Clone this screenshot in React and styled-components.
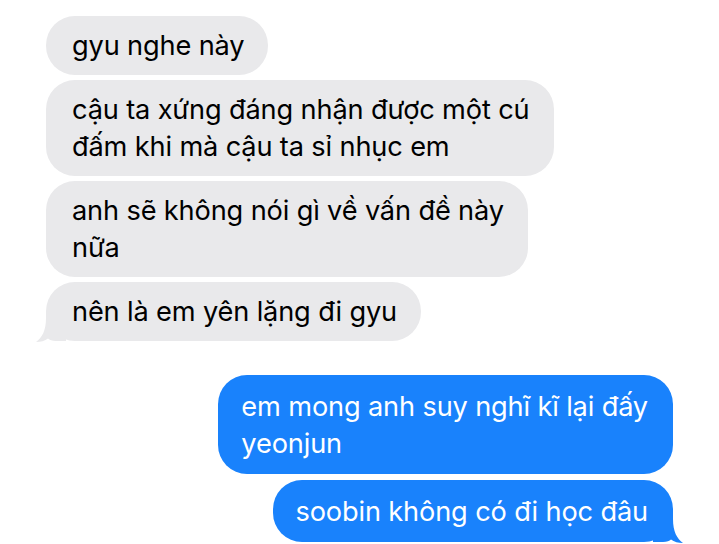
import React from 'react'
import styled, { createGlobalStyle } from 'styled-components'

const GlobalStyle = createGlobalStyle`
  html, body {
    margin: 0;
    padding: 0;
    background: #ffffff;
  }
  body {
    font-family: Inter, "Noto Sans", "Liberation Sans", sans-serif;
    -webkit-font-smoothing: antialiased;
  }
`

const Thread = styled.div`
  display: flex;
  flex-direction: column;
  width: 719px;
  height: 544px;
  padding: 16px 46px 0;
  box-sizing: border-box;
  overflow: hidden;
`

const Group = styled.div`
  display: flex;
  flex-direction: column;
  align-items: ${p => (p.mine ? 'flex-end' : 'flex-start')};
  gap: ${p => (p.mine ? '6px' : '5px')};
  margin-top: ${p => (p.mine ? '34px' : '0')};
`

const Bubble = styled.div`
  position: relative;
  box-sizing: border-box;
  padding: ${p => (p.mine ? '12.5px 25px 12.5px 23px' : '11px 24px 11px 26px')};
  border-radius: 29px;
  background: ${p => (p.mine ? '#1982fc' : '#e9e9eb')};
  color: ${p => (p.mine ? '#ffffff' : '#000000')};
  font-size: 27.2px;
  line-height: 37px;
  letter-spacing: -0.15px;
  white-space: nowrap;
`

const TailSvg = styled.svg`
  position: absolute;
  bottom: -1px;
  width: 30px;
  height: 30px;
  ${p => (p.mine ? 'right: -10px; transform: scaleX(-1);' : 'left: -10px;')}
`

const Tail = ({ mine }) => (
  <TailSvg mine={mine} viewBox="0 0 30 30">
    <path
      d="M10 0 L30 0 L30 29 L20 29 C16 29 13.5 28 12 26.5 C9 29 4.5 30 0 30 C6 25.5 10 19 10 6 Z"
      fill={mine ? '#1982fc' : '#e9e9eb'}
    />
  </TailSvg>
)

const Message = ({ mine, tail, lines }) => (
  <Bubble mine={mine}>
    {lines.map((line, i) => (
      <div key={i}>{line}</div>
    ))}
    {tail && <Tail mine={mine} />}
  </Bubble>
)

const App = () => (
  <>
    <GlobalStyle />
    <Thread>
      <Group>
        <Message lines={['gyu nghe này']} />
        <Message lines={['cậu ta xứng đáng nhận được một cú', 'đấm khi mà cậu ta sỉ nhục em']} />
        <Message lines={['anh sẽ không nói gì về vấn đề này', 'nữa']} />
        <Message tail lines={['nên là em yên lặng đi gyu']} />
      </Group>
      <Group mine>
        <Message mine lines={['em mong anh suy nghĩ kĩ lại đấy', 'yeonjun']} />
        <Message mine tail lines={['soobin không có đi học đâu']} />
      </Group>
    </Thread>
  </>
)

export default App
